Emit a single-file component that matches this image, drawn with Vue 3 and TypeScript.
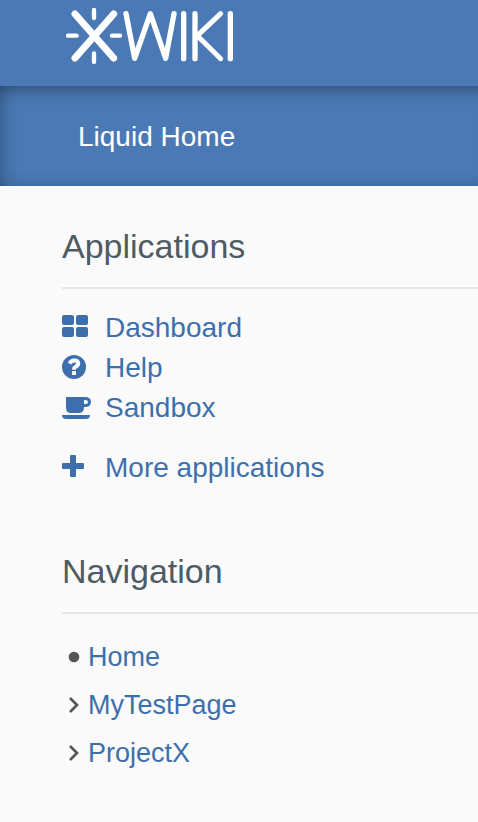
<script setup lang="ts">
interface AppLink {
  label: string
  icon: 'grid' | 'help' | 'cup' | 'plus'
  separated?: boolean
}

interface PageLink {
  label: string
  expandable: boolean
}

const applications: AppLink[] = [
  { label: 'Dashboard', icon: 'grid' },
  { label: 'Help', icon: 'help' },
  { label: 'Sandbox', icon: 'cup' },
  { label: 'More applications', icon: 'plus', separated: true },
]

const pages: PageLink[] = [
  { label: 'Home', expandable: false },
  { label: 'MyTestPage', expandable: true },
  { label: 'ProjectX', expandable: true },
]
</script>

<template>
  <div class="page">
    <header class="topbar">
      <a class="logo" href="#" aria-label="XWiki">
        <svg viewBox="30 21 504 174" fill="none" stroke="#fff" stroke-linecap="round" stroke-linejoin="round">
          <path d="M57 42 173 174M173 42 57 174" stroke-width="21" />
          <path d="M114 30V54M114 160V186M36 107H62M168 107H192" stroke-width="13" />
          <path d="M210 41 236 175 283 41 329 175 354 41" stroke-width="16" />
          <path d="M383 41V176M417 41V176M523 41V176" stroke-width="16" />
          <path d="M494 41 424 107 494 176" stroke-width="15" />
        </svg>
      </a>
    </header>

    <nav class="menu">
      <a class="menu-link" href="#">Liquid Home</a>
    </nav>

    <main class="panels">
      <section class="panel">
        <h2 class="title">Applications</h2>
        <ul class="list">
          <li v-for="app in applications" :key="app.label" :class="['app', { separated: app.separated }]">
            <a class="app-link" href="#">
              <svg class="icon" viewBox="0 1 30 28" fill="currentColor" aria-hidden="true">
                <g v-if="app.icon === 'grid'">
                  <rect x="0" y="2" width="12" height="10" rx="2" />
                  <rect x="14" y="2" width="12" height="10" rx="2" />
                  <rect x="0" y="14" width="12" height="10" rx="2" />
                  <rect x="14" y="14" width="12" height="10" rx="2" />
                </g>
                <g v-else-if="app.icon === 'help'">
                  <circle cx="12" cy="14" r="12" />
                  <path d="M7.6 10.6Q9.2 7.6 12.2 7.6Q16.2 7.6 16.2 10.6Q16.2 12.4 14 13.6Q12 14.7 12 16.8" fill="none" stroke="#fafafa" stroke-width="4" />
                  <rect x="10" y="18" width="4" height="4" fill="#fafafa" />
                </g>
                <g v-else-if="app.icon === 'cup'">
                  <path fill-rule="evenodd" d="M4 4H23Q29 4 29 9Q29 14 23 14H22Q22 20 17 20H9Q4 20 4 15ZM22 7V11H23Q26 11 26 9Q26 7 23 7Z" />
                  <path d="M0 22H28Q28 26 24 26H4Q0 26 0 22Z" />
                </g>
                <path v-else d="M9 2H13Q14 2 14 3V10H21Q22 10 22 11V15Q22 16 21 16H14V23Q14 24 13 24H9Q8 24 8 23V16H1Q0 16 0 15V11Q0 10 1 10H8V3Q8 2 9 2Z" />
              </svg>
              <span>{{ app.label }}</span>
            </a>
          </li>
        </ul>
      </section>

      <section class="panel">
        <h2 class="title">Navigation</h2>
        <ul class="list tree">
          <li v-for="page in pages" :key="page.label" class="node">
            <button v-if="page.expandable" class="toggle" type="button" :aria-label="`Expand ${page.label}`">
              <svg viewBox="0 0 24 24" fill="none" stroke="#555" stroke-width="2.6" aria-hidden="true">
                <path d="M8 5 15 12 8 19" />
              </svg>
            </button>
            <span v-else class="toggle">
              <svg viewBox="0 0 24 24" fill="#555" aria-hidden="true"><circle cx="12" cy="12" r="5.3" /></svg>
            </span>
            <a class="node-link" href="#">{{ page.label }}</a>
          </li>
        </ul>
      </section>
    </main>
  </div>
</template>

<style>
body {
  background: #fafafa;
}
</style>

<style scoped>
.page {
  font-family: "Liberation Sans", Arial, Helvetica, sans-serif;
  font-size: 28px;
  line-height: 40px;
  color: #4f5b63;
  overflow: hidden;
}

.topbar {
  padding: 7px 66px 21px;
  background: #4a79b5;
}

.logo,
.logo svg {
  display: block;
  width: 168px;
  height: 58px;
}

.menu {
  padding: 31px 78px 29px;
  background: #4a79b5;
  box-shadow:
    inset 0 20px 20px -20px rgba(0, 0, 0, 0.48),
    inset 20px 0 20px -20px rgba(0, 0, 0, 0.32),
    inset 0 -16px 16px -16px rgba(0, 0, 0, 0.2);
}

.menu-link {
  display: block;
  color: #fff;
  text-decoration: none;
}

.panels {
  padding-left: 62px;
}

.panel {
  padding-top: 39px;
}

.title {
  margin: 0 0 19px;
  padding-bottom: 20px;
  border-bottom: 2px solid #e5e5e5;
  box-shadow: inset 0 -2px #fff;
  font-size: 34px;
  font-weight: 400;
  line-height: 42px;
}

.list {
  margin: 0;
  padding: 0;
  list-style: none;
}

.separated {
  margin-top: 20px;
}

.panel + .panel {
  padding-top: 62px;
}

.app-link {
  display: flex;
  align-items: center;
  gap: 13px;
  color: #3e6fad;
  text-decoration: none;
}

.icon {
  flex: none;
  width: 30px;
  height: 28px;
}

.tree {
  font-size: 27px;
  line-height: 48px;
}

.node {
  display: flex;
  align-items: center;
  gap: 2px;
}

.toggle {
  flex: none;
  display: flex;
  width: 24px;
  height: 24px;
  padding: 0;
  border: 0;
  background: none;
}

.toggle svg {
  width: 24px;
  height: 24px;
}

.node-link {
  color: #3e6fad;
  text-decoration: none;
}
</style>
